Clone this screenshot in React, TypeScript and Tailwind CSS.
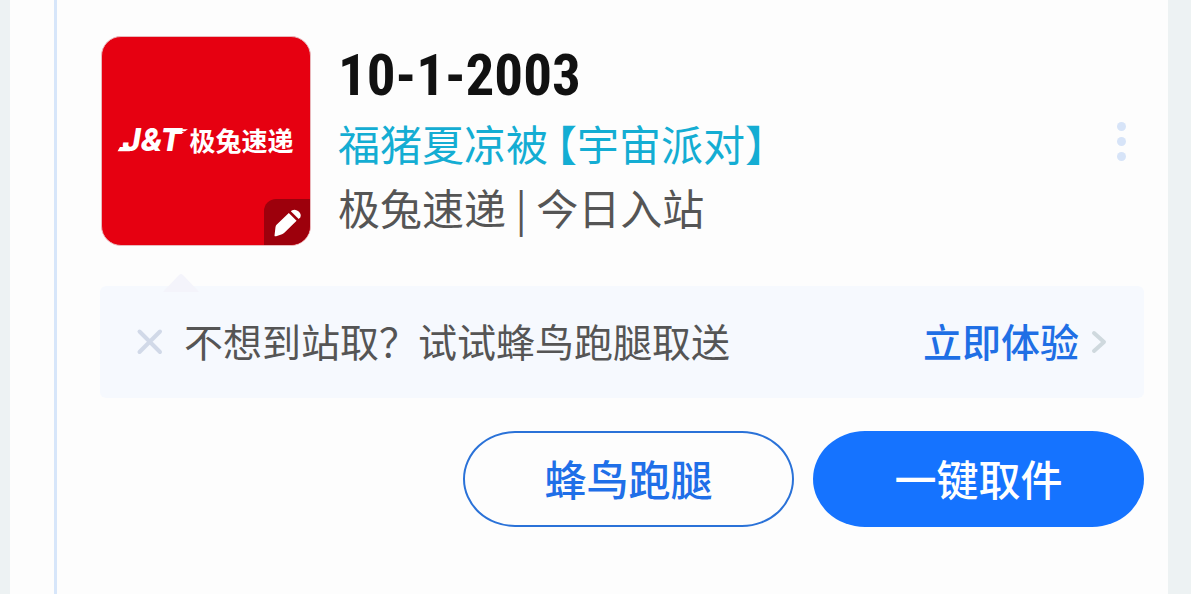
import React from "react";

function CourierLogo() {
  return (
    <div className="relative flex size-[210px] shrink-0 items-center justify-center overflow-hidden rounded-[20px] border border-[#e9b9bd] bg-[#e60011] text-white">
      <div className="flex items-center gap-1 pb-0.5 leading-none">
        <span className="relative pr-1 pl-1 font-['Inter','Liberation_Sans',sans-serif] text-[31px] leading-[30px] font-extrabold italic">
          J&amp;T
          <svg viewBox="0 0 68 30" className="absolute inset-0 h-[30px] w-full overflow-visible" fill="#fff" aria-hidden="true">
            <path d="M1 22H12L11 26.5H-1.5Z" />
            <path d="M52 4H70L67 6.2H52ZM52 7H66L63.5 9H52Z" />
          </svg>
        </span>
        <span className="text-[26px] leading-[30px] font-bold">极兔速递</span>
      </div>
      <button
        type="button"
        aria-label="编辑"
        className="absolute right-0 bottom-0 flex size-[46px] items-center justify-center rounded-tl-[12px] bg-[#9d000c]"
      >
        <svg viewBox="0 0 46 46" className="size-[46px]" fill="#fff" aria-hidden="true">
          <path d="M10.5 36.4 11.5 28Q11.8 26.6 12.8 25.6L24.8 14 32.6 21.8 20.6 33.6Q19.4 34.8 18 35.2L12.2 37.2Q10.6 37.6 10.5 36.4Z" />
          <path d="M26.8 12.2 28.2 11.3Q31.2 9.6 34.4 12.3 37.8 15.4 36.3 18.3L34.7 20.1Z" />
        </svg>
      </button>
    </div>
  );
}

export default function App() {
  return (
    <div className="flex min-h-screen bg-[#edf2f3] pr-[23px] pl-[10px] font-['Noto_Sans_CJK_SC',sans-serif]" lang="zh-CN">
      <div className="flex flex-1 bg-[#fdfdfd] pl-[44px]">
        <main className="flex-1 border-l-[3px] border-[#d7e6fa] pt-[36px] pr-[24px] pl-[43px]">
          <section className="flex items-center">
            <div className="pl-px">
              <CourierLogo />
            </div>
            <div className="flex-1 pb-0.5 pl-[27px]">
              <h1 className="font-['Roboto_Condensed','Liberation_Sans_Narrow',Roboto,sans-serif] text-[57px] leading-[70px] font-bold text-[#111]">
                10-1-2003
              </h1>
              <p className="flex gap-2 text-[42px] leading-[64px] text-[#14add3]">
                <span>福猪夏凉被</span>
                <span className="[font-feature-settings:'halt']">【宇宙派对】</span>
              </p>
              <p className="text-[42px] leading-[64px] text-[#555]">极兔速递 | 今日入站</p>
            </div>
            <button type="button" aria-label="更多" className="mr-[18px] flex flex-col gap-[6px]">
              <span className="size-[9px] rounded-full bg-[#d7e4f8]" />
              <span className="size-[9px] rounded-full bg-[#d7e4f8]" />
              <span className="size-[9px] rounded-full bg-[#d7e4f8]" />
            </button>
          </section>

          <section className="relative mt-[40px] flex h-[112px] items-center rounded-[6px] bg-[#f6f9fe] pr-[37px] pl-[36px]">
            <svg viewBox="0 0 36 19" className="absolute -top-[13px] left-[63px] h-[19px] w-[36px]" aria-hidden="true">
              <path d="M0 19 16 2Q18 0 20 2L36 19Z" fill="#f4f4fb" />
            </svg>
            <button type="button" aria-label="关闭">
              <svg viewBox="0 0 28 28" className="size-[28px]" fill="none" stroke="#d1d9e8" strokeWidth="4" strokeLinecap="round" aria-hidden="true">
                <path d="M3.5 3.5 24 24M24 3.5 3.5 24" />
              </svg>
            </button>
            <p className="flex-1 pb-1 pl-5 text-[39px] leading-[56px] text-[#555]">不想到站取？试试蜂鸟跑腿取送</p>
            <a href="#try" className="flex items-center gap-3 text-[39px] leading-[56px] font-medium text-[#1f6fe5]">
              <span className="pb-1">立即体验</span>
              <svg viewBox="0 0 16 24" className="h-[24px] w-[16px]" fill="none" stroke="#cfd9de" strokeWidth="4" strokeLinecap="round" strokeLinejoin="round" aria-hidden="true">
                <path d="M3 3 13 12 3 21" />
              </svg>
            </a>
          </section>

          <section className="mt-[33px] flex justify-end gap-[19px]">
            <button type="button" className="h-[96px] w-[331px] rounded-[52px/48px] border-2 border-[#2a72d8] pb-1 text-[42px] font-medium text-[#1f6fe8]">
              蜂鸟跑腿
            </button>
            <button type="button" className="h-[96px] w-[331px] rounded-[52px/48px] bg-[#1573ff] pb-1 text-[42px] font-medium text-white">
              一键取件
            </button>
          </section>
        </main>
      </div>
    </div>
  );
}
